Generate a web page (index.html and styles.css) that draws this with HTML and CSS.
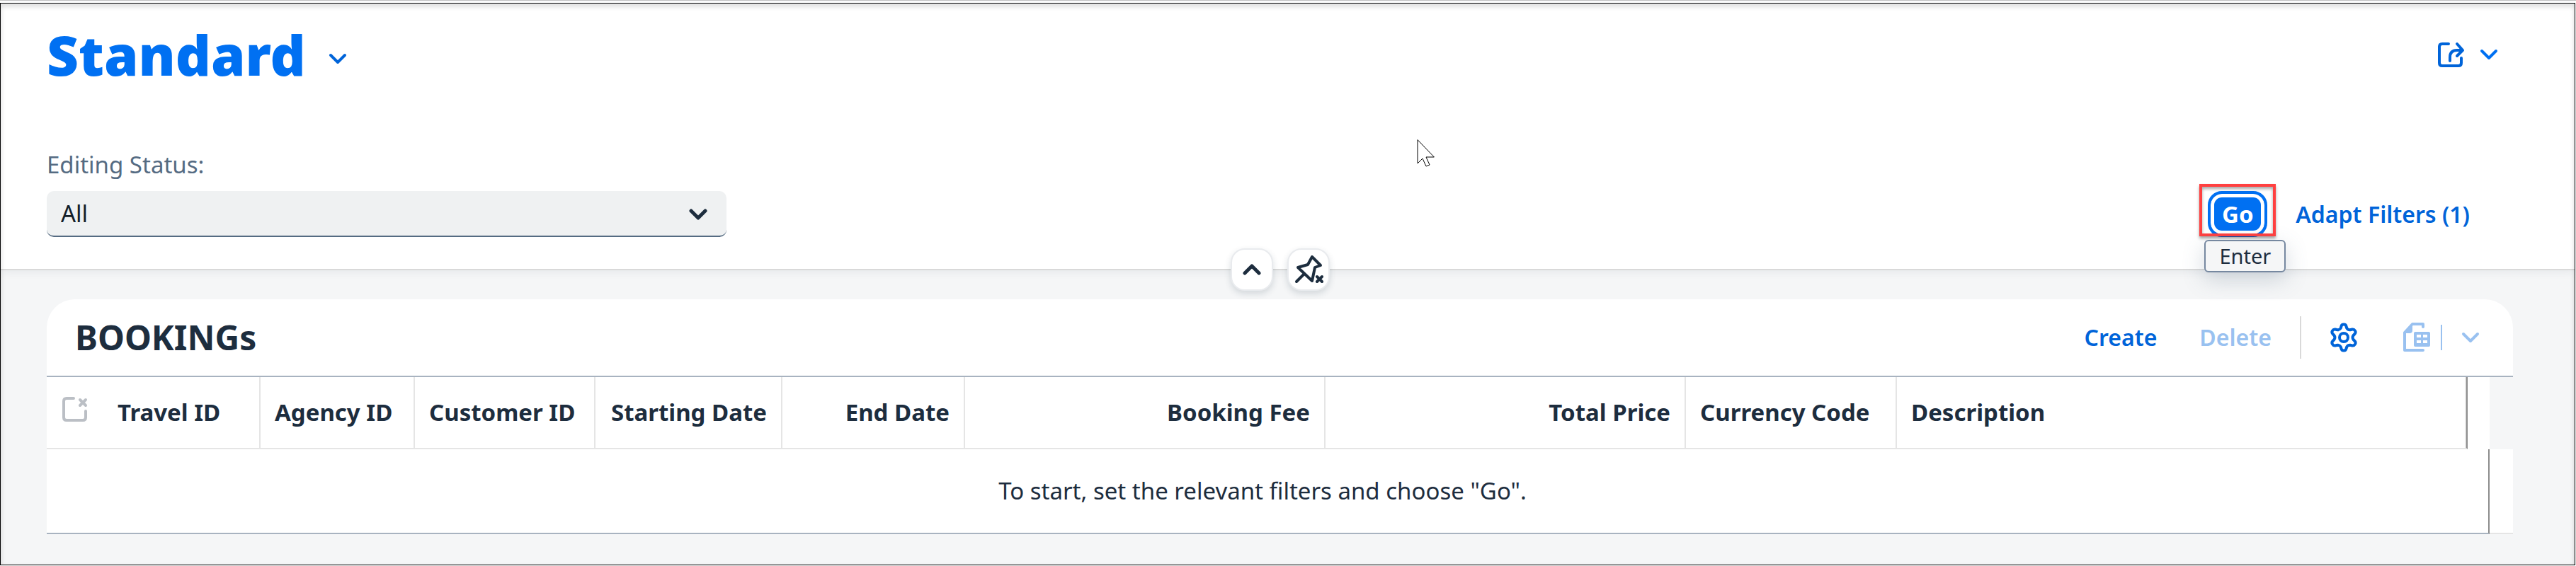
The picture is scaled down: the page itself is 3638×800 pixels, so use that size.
FILE: index.html
```html
<!DOCTYPE html>
<html lang="en">
<head>
<meta charset="utf-8">
<title>Bookings</title>
<link rel="stylesheet" href="styles.css">
</head>
<body>
<div class="frame">
  <header class="page-header">
    <div class="title-row">
      <h1 class="variant-title">Standard</h1>
      <button class="icon-button variant-toggle" type="button" aria-label="Select view">
        <svg class="chevron" viewBox="0 0 26 16"><path d="M3 3l10 10L23 3"/></svg>
      </button>
      <button class="icon-button share-button" type="button" aria-label="Share">
        <svg class="share-icon" viewBox="0 0 39 37"><path d="M16 3H7q-4 0-4 4v23q0 4 4 4h23q4 0 4-4v-7M18 27v-5q0-10 10-10h7M28 3l8 9-8 8"/></svg>
        <svg class="chevron chevron-bright" viewBox="0 0 26 16"><path d="M3 3l10 10L23 3"/></svg>
      </button>
    </div>
    <div class="filter-row">
      <div class="field">
        <label class="field-label" for="editing-status">Editing Status:</label>
        <div class="select-box">
          <select class="select" id="editing-status"><option>All</option></select>
          <svg class="chevron chevron-dark" viewBox="0 0 26 16"><path d="M3 3l10 10L23 3"/></svg>
        </div>
      </div>
      <div class="filter-actions">
        <div class="go-box">
          <button class="go-button" type="button">Go</button>
          <div class="highlight"></div>
          <div class="tooltip" role="tooltip">Enter</div>
        </div>
        <button class="text-button adapt-button" type="button">Adapt Filters (1)</button>
      </div>
    </div>
    <div class="header-toggles">
      <button class="round-button" type="button" aria-label="Collapse header">
        <svg class="chevron chevron-dark" viewBox="0 0 26 16"><path d="M3 13L13 3l10 10"/></svg>
      </button>
      <button class="round-button" type="button" aria-label="Pin header">
        <svg class="pin-icon" viewBox="0 0 42 42"><path d="M26 3l12 12-8 3-4 19L6 18l14-4 6-11M15 27L4 38"/><path d="M33 31l7 7m0-7l-7 7"/></svg>
      </button>
    </div>
    <svg class="cursor" viewBox="0 0 26 40"><path d="M1 1v33l7-7 5 11 5-2-5-11h11z"/></svg>
  </header>

  <main class="content">
    <section class="card">
      <div class="toolbar">
        <h2 class="toolbar-title">BOOKINGs</h2>
        <button class="text-button" type="button">Create</button>
        <button class="text-button" type="button" disabled>Delete</button>
        <span class="separator"></span>
        <button class="icon-button" type="button" aria-label="Settings">
          <svg class="gear-icon" viewBox="-19 -21 38 42"><path d="M-3.4-16Q-3-18.5 0-18.5T3.4-16L4.4-13Q6-10.500 9-10.700L12-11.500Q14.500-12 16-9.500T15.500-5L13.600-3Q11.500 0 13.600 3L15.500 5Q17.500 7 16 9.500T12 11.500L9 10.700Q6 10.500 4.400 13L3.400 16Q3 18.500 0 18.500T-3.400 16L-4.400 13Q-6 10.500-9 10.700L-12 11.500Q-14.500 12-16 9.500T-15.500 5L-13.600 3Q-11.500 0-13.600-3L-15.500-5Q-17.500-7-16-9.500T-12-11.500L-9-10.700Q-6-10.500-4.400-13z"/><circle r="6"/></svg>
        </button>
        <span class="export">
          <button class="icon-button" type="button" aria-label="Export to spreadsheet" disabled>
            <svg class="sheet-icon" viewBox="0 0 38 42"><path class="line" d="M28 6V2H13L2 14v25h26"/><path class="fill" d="M13 2v9q0 4-4 4H1z"/><path class="fill" fill-rule="evenodd" d="M17 13h19q2 0 2 2v17q0 2-2 2H17q-2 0-2-2V15q0-2 2-2zm2 4v4h6v-4zm9 0v4h6v-4zm-9 8v4h6v-4zm9 0v4h6v-4z"/></svg>
          </button>
          <button class="icon-button export-more" type="button" aria-label="Export options" disabled>
            <svg class="chevron" viewBox="0 0 26 16"><path d="M3 3l10 10L23 3"/></svg>
          </button>
        </span>
      </div>
      <table class="table">
        <colgroup>
          <col class="col-select"><col class="col-travel"><col class="col-agency"><col class="col-customer"><col class="col-start"><col class="col-end"><col class="col-amount"><col class="col-amount"><col class="col-currency"><col><col class="col-nav"><col class="col-scroll">
        </colgroup>
        <thead>
          <tr>
            <th class="cell-select">
              <button class="icon-button" type="button" aria-label="Clear selection" disabled>
                <svg class="clear-icon" viewBox="0 0 36 36"><path d="M16 2H6Q2 2 2 6v23q0 4 4 4h23q4 0 4-4v-9M25 4l8 8m0-8l-8 8"/></svg>
              </button>
            </th>
            <th class="cell">Travel ID</th>
            <th class="cell">Agency ID</th>
            <th class="cell">Customer ID</th>
            <th class="cell number">Starting Date</th>
            <th class="cell number">End Date</th>
            <th class="cell number">Booking Fee</th>
            <th class="cell number">Total Price</th>
            <th class="cell">Currency Code</th>
            <th class="cell cell-last">Description</th>
            <td class="cell-nav"></td>
            <td></td>
          </tr>
        </thead>
        <tbody>
          <tr>
            <td class="message" colspan="11">To start, set the relevant filters and choose "Go".</td>
            <td class="scroll-track"></td>
          </tr>
        </tbody>
      </table>
    </section>
  </main>
</div>
</body>
</html>
```

FILE: styles.css
```css
* {
  box-sizing: border-box;
}

body {
  margin: 0;
  padding: 3px 1px 1px 0;
  min-height: 100vh;
  display: flex;
  border-top: 1px solid #c0c0c0;
  background: #fff;
  color: #1d2d3e;
  font-family: "Noto Sans", "Open Sans", sans-serif;
  font-size: 33px;
  line-height: 44px;
}

button,
select {
  margin: 0;
  padding: 0;
  border: 0;
  background: none;
  color: inherit;
  font: inherit;
}

svg {
  display: block;
  fill: none;
  stroke: currentColor;
  stroke-width: 4px;
  stroke-linecap: round;
  stroke-linejoin: round;
}

.frame {
  position: relative;
  flex: 1;
  min-width: 0;
  border: 1px solid #000;
  background: #f5f6f7;
}

.frame::after {
  content: "";
  position: absolute;
  inset: 0;
  box-shadow: inset 0 4px 6px 1px rgba(0, 0, 0, 0.12);
  pointer-events: none;
}

/* Header */
.page-header {
  position: relative;
  padding: 24px 108px 45px 65px;
  border-bottom: 2px solid #d9d9d9;
  background: #fff;
  box-shadow: 0 2px 12px rgba(34, 53, 72, 0.08);
}

.title-row {
  display: flex;
  align-items: center;
  height: 96px;
  margin-bottom: 86px;
}

.variant-title {
  margin: 0;
  color: #0070f2;
  font-size: 78px;
  font-weight: 900;
  line-height: 96px;
}

.icon-button {
  display: flex;
  align-items: center;
  color: #0064d9;
}

.variant-toggle {
  margin: 12px 0 0 32px;
}

.share-button {
  gap: 21px;
  margin-left: auto;
}

.chevron {
  width: 26px;
  height: 16px;
}

.chevron-bright {
  color: #0070f2;
}

.chevron-dark {
  color: #1d2d3e;
  stroke-width: 5px;
}

.share-icon {
  width: 39px;
  height: 37px;
}

.filter-row {
  display: flex;
  justify-content: space-between;
  align-items: flex-end;
}

.field {
  display: grid;
  gap: 15px;
  width: 960px;
}

.field-label {
  color: #556b82;
}

.select-box {
  display: grid;
  align-items: center;
}

.select {
  grid-area: 1 / 1;
  width: 100%;
  height: 65px;
  padding: 0 20px;
  appearance: none;
  border-bottom: 2px solid #556b82;
  border-radius: 10px;
  background: #eff1f2;
  color: #131e29;
}

.select-box .chevron {
  grid-area: 1 / 1;
  justify-self: end;
  margin-right: 27px;
  pointer-events: none;
}

.filter-actions {
  display: flex;
}

.text-button {
  color: #0064d9;
  font-size: 32px;
  font-weight: 600;
}

.adapt-button {
  padding: 0 40px;
}

.go-box {
  position: relative;
}

.go-button {
  width: 84px;
  height: 65px;
  border: 4px solid #0070f2;
  border-radius: 20px;
  background: #0070f2;
  box-shadow: inset 0 0 0 5px #fff;
  color: #fff;
  font-weight: 700;
}

.highlight {
  position: absolute;
  inset: -10px -12px 1px;
  border: 4px solid #ff4040;
  box-shadow: 0 3px 4px rgba(0, 0, 0, 0.35), inset 0 3px 4px rgba(0, 0, 0, 0.35);
  pointer-events: none;
}

.tooltip {
  position: absolute;
  z-index: 1;
  top: 69px;
  left: -5px;
  width: 115px;
  border: 2px solid #7688a0;
  border-radius: 6px;
  background: #f5f6f7;
  box-shadow: 0 10px 30px rgba(85, 107, 130, 0.25);
  font-size: 29px;
  line-height: 42px;
  text-align: center;
}

.header-toggles {
  position: absolute;
  right: 22px;
  bottom: -31px;
  left: 0;
  display: flex;
  justify-content: center;
  gap: 20px;
}

.round-button {
  display: grid;
  place-items: center;
  width: 60px;
  height: 60px;
  border: 2px solid #e9ebee;
  border-radius: 20px;
  background: #fff;
  box-shadow: 0 4px 10px rgba(34, 53, 72, 0.16);
}

.pin-icon {
  width: 42px;
  height: 42px;
}

.cursor {
  position: absolute;
  top: 192px;
  left: 2000px;
  width: 26px;
  height: 40px;
  fill: #fff;
  stroke: #000;
  stroke-width: 1px;
  stroke-linejoin: miter;
}

/* Table card */
.content {
  padding: 41px 87px 43px 65px;
}

.toolbar {
  display: flex;
  align-items: center;
  height: 110px;
  padding: 0 47px 0 40px;
  border-bottom: 2px solid #a8b3c0;
  border-radius: 40px 40px 0 0;
  background: #fff;
}

.toolbar-title {
  margin: 0 auto 0 0;
  font-size: 48px;
  font-weight: 700;
  line-height: 64px;
}

.toolbar .text-button {
  margin-right: 60px;
}

.toolbar .text-button:nth-of-type(2) {
  margin-right: 40px;
}

.toolbar button:disabled {
  color: #99c1f0;
}

.separator {
  width: 2px;
  height: 60px;
  margin-right: 41px;
  background: #d9d9d9;
}

.gear-icon,
.sheet-icon {
  width: 38px;
  height: 42px;
}

.sheet-icon .fill {
  fill: currentColor;
  stroke: none;
}

.export {
  display: flex;
  align-items: center;
  margin-left: 65px;
}

.export-more {
  height: 36px;
  margin-left: 15px;
  padding-left: 27px;
  border-left: 2px solid #99c1f0;
}

.table {
  width: 100%;
  border-spacing: 0;
  table-layout: fixed;
}

.table th,
.table td {
  padding: 0;
}

.col-select { width: 80px; }
.col-travel { width: 222px; }
.col-agency { width: 218px; }
.col-customer { width: 255px; }
.col-start { width: 264px; }
.col-end { width: 258px; }
.col-amount { width: 509px; }
.col-currency { width: 298px; }
.col-nav { width: 31px; }
.col-scroll { width: 33px; }

.table .cell,
.cell-select {
  height: 102px;
  border-bottom: 2px solid #e5e5e5;
  background: #fff;
  font-weight: 700;
  text-align: left;
  white-space: nowrap;
}

.table .cell {
  padding: 0 20px;
  border-right: 2px solid #e5e5e5;
}

.table .number {
  text-align: right;
}

.table .cell-last {
  border-right-color: #8c8c8c;
  box-shadow: inset -2px 0 #e5e5e5;
}

.table .cell-select {
  padding: 0 0 8px 22px;
}

.clear-icon {
  width: 36px;
  height: 36px;
  color: #bbbfc5;
}

.cell-nav,
.scroll-track {
  background: #fff;
}

.table .message {
  height: 120px;
  padding: 0 34px 0 20px;
  border-right: 2px solid #8c8c8c;
  border-bottom: 2px solid #a8b3c0;
  background: #fff;
  text-align: center;
}

.scroll-track {
  border-bottom: 2px solid #e5e5e5;
}
```
